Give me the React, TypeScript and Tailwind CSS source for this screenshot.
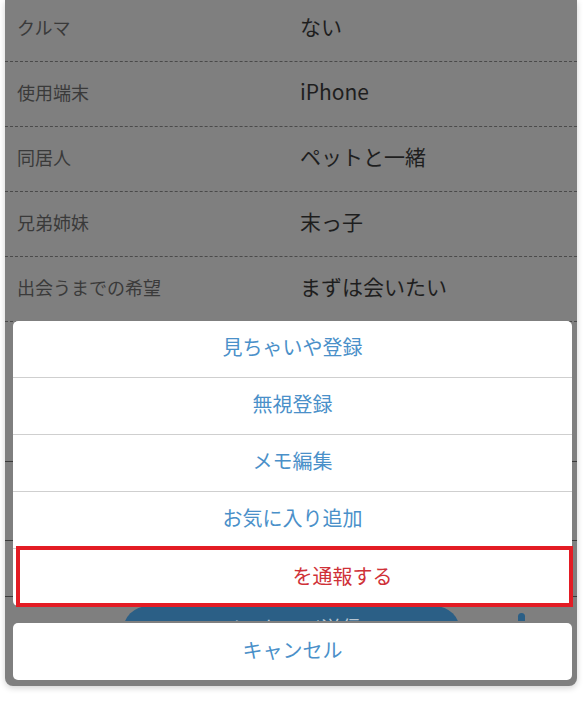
import React from "react";

const rows = [
  { label: "クルマ", value: "ない" },
  { label: "使用端末", value: "iPhone" },
  { label: "同居人", value: "ペットと一緒" },
  { label: "兄弟姉妹", value: "末っ子" },
  { label: "出会うまでの希望", value: "まずは会いたい" },
];

const actions = ["見ちゃいや登録", "無視登録", "メモ編集", "お気に入り追加"];

export default function App() {
  return (
    <div
      className="min-h-screen bg-white"
      style={{ fontFamily: '"Noto Sans CJK JP", "Noto Sans", sans-serif' }}
    >
      <div className="relative ml-[5px] h-[686px] w-[572px] overflow-hidden rounded-b-[8px] bg-[#7f7f7f] shadow-[0_2px_6px_rgba(0,0,0,0.18)]">
        {/* profile rows behind the overlay */}
        <div className="-mt-[3px]">
          {rows.map((row) => (
            <div
              key={row.label}
              className="flex h-[65px] items-center border-b border-dashed border-[#4a4a4a] pb-[4px]"
            >
              <div className="w-[295px] pl-[12px] text-[18px] text-[#3a3a3a]">
                {row.label}
              </div>
              <div className="text-[21px] text-[#1e1e1e]">{row.value}</div>
            </div>
          ))}
        </div>
        <div className="h-[140px] border-b border-[#3a3a3a]" />
        <div className="h-[79px] border-b border-[#3a3a3a]" />
        <div className="h-[56px] border-b border-[#3a3a3a]" />
        <div className="mt-[9px] flex h-[15px] items-start overflow-hidden">
          <div className="ml-[118px] flex h-[50px] w-[337px] justify-center rounded-full bg-[#2b5f86] pt-[10px] text-[20px] leading-[24px] text-[#b9c6d1]">
            メッセージ送信
          </div>
          <div className="ml-[58px] mt-[7px] h-[10px] w-[7px] rounded-t-full bg-[#2b5f86]" />
        </div>

        {/* action sheet */}
        <div className="absolute bottom-[6px] left-[8px] right-[5px] flex flex-col gap-[17px]">
          <div className="rounded-[5px] bg-white">
            {actions.map((a) => (
              <div
                key={a}
                className="flex h-[57px] items-center justify-center border-b border-[#cfcfcf] pb-[4px] text-[20px] text-[#4a90c9]"
              >
                {a}
              </div>
            ))}
            <div className="relative flex h-[57px] items-center justify-center pb-[4px] pl-[100px] text-[20px] text-[#cf3138]">
              を通報する
              <div className="absolute -bottom-[1px] -right-[1px] -top-[3px] left-[3px] border-[4px] border-[#e31c24]" />
            </div>
          </div>
          <div className="flex h-[57px] items-center justify-center rounded-[5px] bg-white pb-[4px] text-[20px] text-[#4a90c9]">
            キャンセル
          </div>
        </div>
      </div>
    </div>
  );
}
